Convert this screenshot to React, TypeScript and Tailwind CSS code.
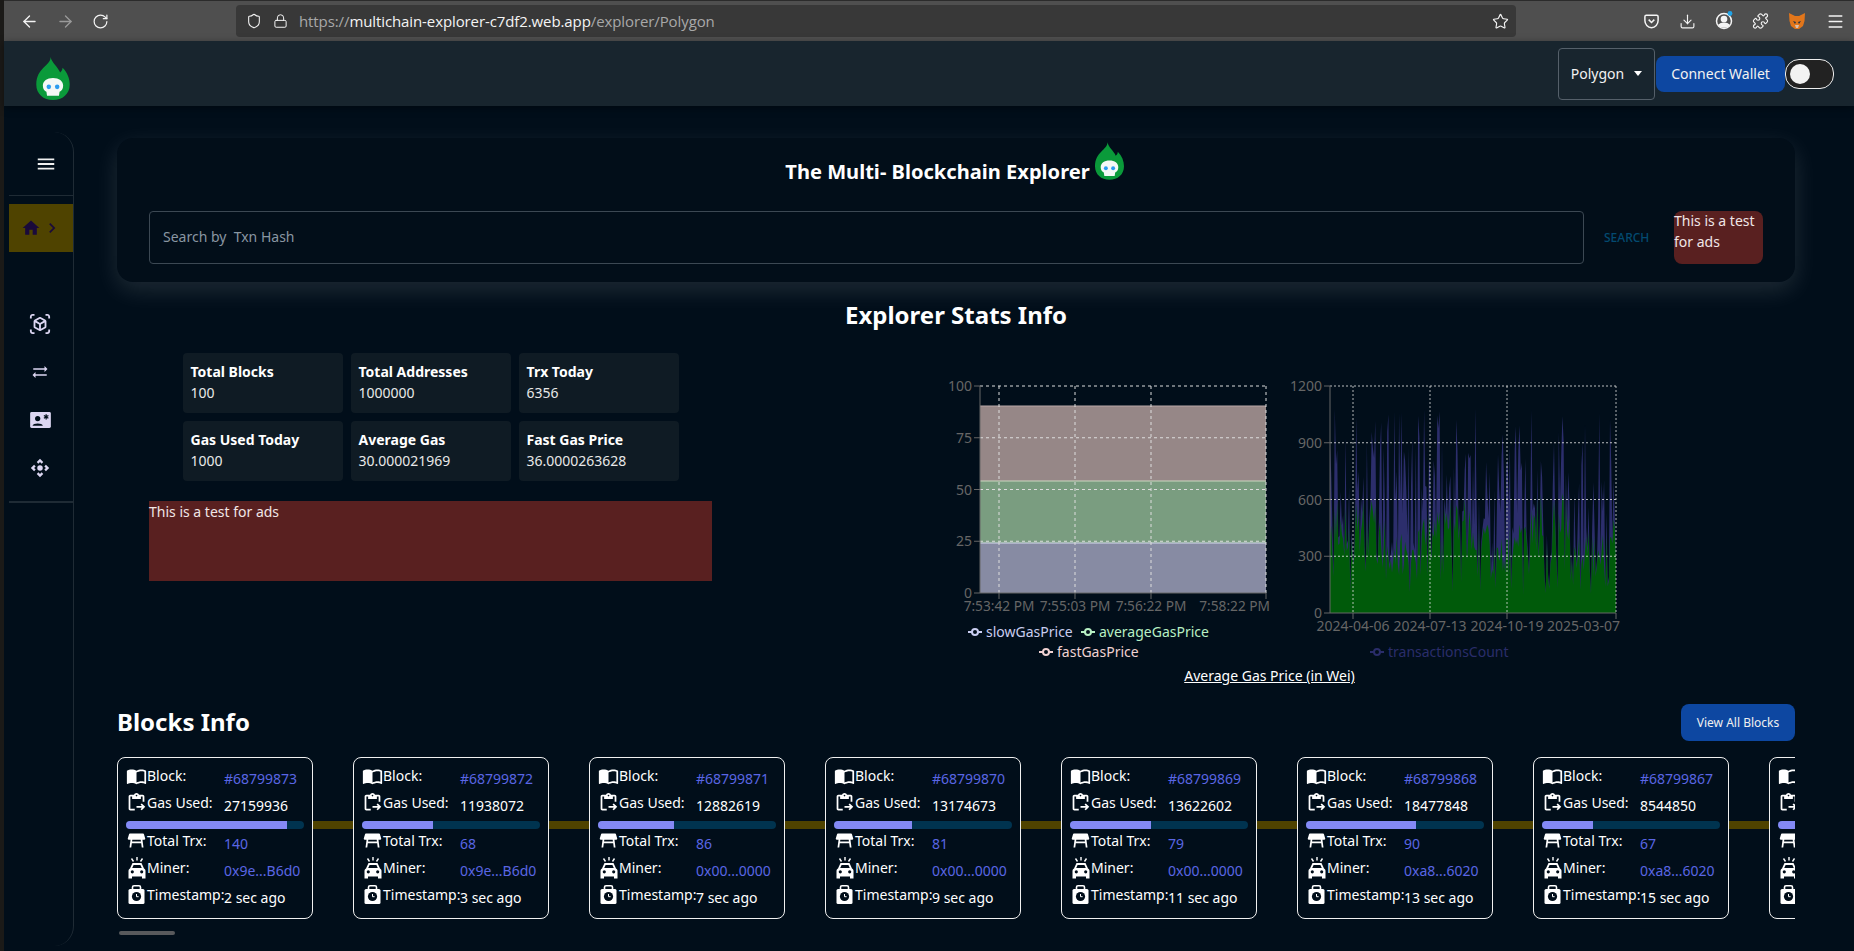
import type { ReactNode } from 'react';
import { ArrowLeft, ArrowRight, RotateCw, Shield, Lock, Star, Download, Puzzle, Menu } from 'lucide-react';
import {
  MdMenu,
  MdHome,
  MdChevronRight,
  MdOutlineViewInAr,
  MdSyncAlt,
  MdControlCamera,
  MdImportContacts,
  MdOutlineContentPasteGo,
  MdTableRestaurant,
} from 'react-icons/md';

const blocks = [
  { id: 68799873, gas: 27159936, trx: 140, miner: '0x9e...B6d0', time: '2 sec ago' },
  { id: 68799872, gas: 11938072, trx: 68, miner: '0x9e...B6d0', time: '3 sec ago' },
  { id: 68799871, gas: 12882619, trx: 86, miner: '0x00...0000', time: '7 sec ago' },
  { id: 68799870, gas: 13174673, trx: 81, miner: '0x00...0000', time: '9 sec ago' },
  { id: 68799869, gas: 13622602, trx: 79, miner: '0x00...0000', time: '11 sec ago' },
  { id: 68799868, gas: 18477848, trx: 90, miner: '0xa8...6020', time: '13 sec ago' },
  { id: 68799867, gas: 8544850, trx: 67, miner: '0xa8...6020', time: '15 sec ago' },
  { id: 68799866, gas: 14220311, trx: 74, miner: '0xa8...6020', time: '17 sec ago' },
];

const stats = [
  { label: 'Total Blocks', value: '100' },
  { label: 'Total Addresses', value: '1000000' },
  { label: 'Trx Today', value: '6356' },
  { label: 'Gas Used Today', value: '1000' },
  { label: 'Average Gas', value: '30.000021969' },
  { label: 'Fast Gas Price', value: '36.0000263628' },
];

// fake but stable tx counts for the area chart
function noise(i: number) {
  const x = Math.sin(i * 12.9898 + 4.1) * 43758.5453;
  return x - Math.floor(x);
}

const TX_POINTS = 240;
const txTotal = Array.from({ length: TX_POINTS + 1 }, (_, i) => 110 + noise(i + 3) * 975);
const txLower = txTotal.map((v, i) => Math.min(v * 0.9, 300 + Math.sin(i / 13) * 120 + noise(i + 211) * 260));

function toArea(values: number[], left: number, right: number, bottom: number, top: number) {
  let d = `M${left} ${bottom}`;
  values.forEach((v, i) => {
    const x = left + ((right - left) * i) / (values.length - 1);
    d += ` L${x.toFixed(1)} ${(bottom - ((bottom - top) * v) / 1200).toFixed(1)}`;
  });
  return `${d} L${right} ${bottom} Z`;
}

function Logo({ className }: { className: string }) {
  return (
    <svg viewBox="0 0 28 36" className={className}>
      <path
        d="M12 0C13 5 18 8 20 13C21 12 22 11 22 9C26 13 28 18 28 23C28 31 22 36 14 36C6 36 0 31 0 23C0 16 3 12 6 9C9 6 12 4 12 0Z"
        fill="#0a9a3a"
      />
      <path d="M5.5 24C5.5 20 9 17.5 14 17.5C19 17.5 22.5 20 22.5 24C22.5 27 21 28.5 19.5 29L19 32.5H9L8.5 29C7 28.5 5.5 27 5.5 24Z" fill="#f4f8f6" />
      <circle cx="10.5" cy="25" r="1.9" fill="#2c9cf0" />
      <circle cx="17.5" cy="25" r="1.9" fill="#2c9cf0" />
    </svg>
  );
}

function ContactIcon() {
  return (
    <svg viewBox="0 0 22 17" className="w-[21px] h-[16px]">
      <rect width="22" height="17" rx="1.5" fill="#dcd6f2" />
      <circle cx="8" cy="7" r="2.8" fill="#010e1a" />
      <path d="M2.5 14.5C3 11.5 13 11.5 13.5 14.5Z" fill="#010e1a" />
      <path d="M17 2.5V8M14.6 3.8L19.4 6.7M19.4 3.8L14.6 6.7" stroke="#010e1a" strokeWidth="1.3" />
    </svg>
  );
}

function MinerIcon() {
  return (
    <svg viewBox="0 0 18 22" className="w-[18px] h-[22px]" fill="white">
      <path d="M9 0V3.5M3.5 1.5L5.5 4.5M14.5 1.5L12.5 4.5" stroke="white" strokeWidth="1.4" fill="none" />
      <path
        fillRule="evenodd"
        d="M4.5 6H13.5L16 11.5C17 12 17.5 12.8 17.5 14V21.5H14V19.5H4V21.5H0.5V14C0.5 12.8 1 12 2 11.5ZM5.6 8L4.2 11H13.8L12.4 8ZM4.3 13.2A1.6 1.6 0 1 0 4.3 16.4A1.6 1.6 0 1 0 4.3 13.2ZM13.7 13.2A1.6 1.6 0 1 0 13.7 16.4A1.6 1.6 0 1 0 13.7 13.2Z"
      />
    </svg>
  );
}

function StampIcon() {
  return (
    <svg viewBox="0 0 17 19" className="w-[17px] h-[19px]">
      <path d="M4.5 4V2.2C4.5 1.2 5.2 .8 6 .8H11C11.8 .8 12.5 1.2 12.5 2.2V4" fill="none" stroke="white" strokeWidth="1.6" />
      <rect x="0.5" y="4" width="16" height="15" rx="1.5" fill="white" />
      <circle cx="8.5" cy="11.5" r="4.6" fill="#010e1a" />
      <path d="M8.5 9V11.7H10.6" fill="none" stroke="white" strokeWidth="1" />
    </svg>
  );
}

function BrowserBar() {
  return (
    <div className="h-[41px] shrink-0 flex items-center bg-[#4f4f4f] border-t border-[#2b2b2b] text-[#f4f4f4]">
      <div className="w-[232px] pl-[16px] flex items-center gap-[17px]">
        <ArrowLeft className="w-[19px] h-[19px]" strokeWidth={1.7} />
        <ArrowRight className="w-[19px] h-[19px] text-[#9a9a9a]" strokeWidth={1.7} />
        <RotateCw className="w-[17px] h-[17px]" strokeWidth={1.7} />
      </div>
      <div className="w-[1280px] h-[32px] rounded bg-[#383838] flex items-center pl-[9px] pr-[7px]">
        <Shield className="w-[16px] h-[18px] shrink-0 ml-px" strokeWidth={1.6} />
        <Lock className="w-[15px] h-[18px] ml-[11px] shrink-0" strokeWidth={1.6} />
        <span className="ml-[11px] text-[15px] tracking-[-0.1px] text-[#a8a8a8] font-['Open_Sans',sans-serif]">
          https://<span className="text-[#f4f4f4]">multichain-explorer-c7df2.web.app</span>/explorer/Polygon
        </span>
        <Star className="w-[17px] h-[17px] ml-auto" strokeWidth={1.6} />
      </div>
      <div className="flex-1 flex items-center gap-[19px] pl-[127px]">
        <svg viewBox="0 0 18 18" className="w-[17px] h-[17px] shrink-0" fill="none" stroke="currentColor" strokeWidth="1.6">
          <path d="M3.5 2.5H14.5C15.5 2.5 16 3 16 4V8C16 12 13 15.5 9 15.5C5 15.5 2 12 2 8V4C2 3 2.5 2.5 3.5 2.5Z" />
          <path d="M6 7L9 10L12 7" />
        </svg>
        <Download className="w-[17px] h-[17px] shrink-0" strokeWidth={1.6} />
        <svg viewBox="0 0 18 18" className="w-[18px] h-[18px] shrink-0 overflow-visible" fill="none" stroke="currentColor" strokeWidth="1.5">
          <circle cx="9" cy="9" r="7.5" />
          <circle cx="9" cy="7" r="2.6" fill="currentColor" />
          <path d="M4 13C6 10.5 12 10.5 14 13C12 15.6 6 15.6 4 13Z" fill="currentColor" />
          <circle cx="15" cy="1.5" r="2.4" fill="#1fa3e8" stroke="none" />
        </svg>
        <Puzzle className="w-[17px] h-[18px] shrink-0" strokeWidth={1.6} />
        <svg viewBox="0 0 18 18" className="w-[18px] h-[18px] shrink-0">
          <path d="M1 1L7 4H11L17 1L16.5 9L15 14L11 17H7L3 14L1.5 9Z" fill="#e2761b" />
          <path d="M5 9L8 10L7 12ZM13 9L10 10L11 12Z" fill="#233447" />
          <path d="M7 13H11L10 16H8Z" fill="#d7c1b3" />
        </svg>
        <Menu className="w-[19px] h-[19px] shrink-0 ml-[1px]" strokeWidth={1.7} />
      </div>
    </div>
  );
}

function TopNav() {
  return (
    <div className="h-[65px] shrink-0 bg-[#18252e] flex items-center pl-[32px] pr-[20px] shadow-[0_2px_8px_rgba(0,0,0,0.4)]">
      <Logo className="w-[34px] h-[43px] mt-[9px]" />
      <button className="ml-auto h-[52px] w-[97px] rounded border border-[#55606a] flex items-center justify-center gap-[10px] text-[14px] text-[#f2f2f2]">
        Polygon
        <span className="w-0 h-0 border-x-[4px] border-x-transparent border-t-[5px] border-t-white" />
      </button>
      <button className="h-[36px] w-[129px] ml-px rounded-lg bg-[#0d47a1] text-[14px] text-[#f2f2f2]">Connect Wallet</button>
      <div className="w-[49px] h-[30px] mt-[1px] rounded-[14px] border-[1.5px] border-[#eeeeee] bg-[#222222] flex items-center pl-[4px]">
        <span className="w-[20px] h-[20px] rounded-full bg-[#f2f2f2]" />
      </div>
    </div>
  );
}

function SideIcon({ children }: { children: ReactNode }) {
  return <div className="h-[48px] flex items-center justify-center pr-[2px] text-[#dcd6f2]">{children}</div>;
}

function Sidebar() {
  return (
    <aside className="w-[70px] shrink-0 mt-[26px] mb-[5px] pl-[5px] border-r border-[#1f2b35] rounded-r-[20px]">
      <div className="h-[64px] flex items-center justify-center pl-[10px] text-[#f0f0f0] border-b border-[#1f2b35]">
        <MdMenu size={22} />
      </div>
      <div className="h-[48px] mt-[8px] bg-[#4f4300] flex items-center pl-[12px] text-[#1a0a3a]">
        <MdHome size={20} />
        <MdChevronRight size={20} className="ml-[1px]" />
      </div>
      <div className="mt-[48px]">
        <SideIcon>
          <MdOutlineViewInAr size={22} />
        </SideIcon>
        <SideIcon>
          <MdSyncAlt size={18} />
        </SideIcon>
        <SideIcon>
          <ContactIcon />
        </SideIcon>
        <SideIcon>
          <MdControlCamera size={22} />
        </SideIcon>
      </div>
      <div className="mt-[9px] h-[2px] bg-[#1f2b35]" />
    </aside>
  );
}

function Hero() {
  return (
    <div className="h-[144px] rounded-2xl bg-[#020e19] shadow-[0_8px_24px_rgba(255,255,255,0.12)] px-8 pt-[4px]">
      <div className="flex items-end justify-center h-[38px] gap-[5px] pr-[3px]">
        <h1 className="text-[20.1px] leading-[30px] font-bold text-white -mb-[7px]">The Multi- Blockchain Explorer</h1>
        <Logo className="w-[29px] h-[38px]" />
      </div>
      <div className="flex items-stretch mt-[31px] h-[53px]">
        <div className="flex-1 rounded border border-[#3c4853] flex items-center pl-[13px] pb-[2px] text-[14px] text-[#8996a2]">
          Search by&nbsp; Txn Hash
        </div>
        <button className="w-[90px] pl-[20px] text-left text-[12px] font-medium text-[#034a70]">SEARCH</button>
        <div className="w-[89px] rounded-lg bg-[#592020] text-[14px] leading-[21px] text-[#f0e6e6]">
          <p className="-mt-px">This is a test for ads</p>
        </div>
      </div>
    </div>
  );
}

function Legend({ x, y, color, label }: { x: number; y: number; color: string; label: string }) {
  return (
    <g>
      <line x1={x} x2={x + 14} y1={y} y2={y} stroke={color} strokeWidth="2" />
      <circle cx={x + 7} cy={y} r="3" fill="#010e1a" stroke={color} strokeWidth="2" />
      <text x={x + 18} y={y + 5} fontSize="14" fill={color}>
        {label}
      </text>
    </g>
  );
}

function GasChart() {
  const grid = [16, 67.75, 119.5, 171.25];
  const vert = [89, 165, 241, 356];
  return (
    <svg width="360" height="295" className="shrink-0">
      <rect x="70" y="36" width="286" height="75" fill="#968787" />
      <rect x="70" y="111" width="286" height="62" fill="#7a9d80" />
      <rect x="70" y="173" width="286" height="50" fill="#878ba3" />
      <line x1="70" x2="356" y1="36" y2="36" stroke="#b9a8a8" />
      <line x1="70" x2="356" y1="111" y2="111" stroke="#ccd8c0" />
      <line x1="70" x2="356" y1="173" y2="173" stroke="#d8dcf0" />
      {grid.map((y) => (
        <line key={y} x1="70" x2="356" y1={y} y2={y} stroke="#ddd" strokeDasharray="3 3" />
      ))}
      {vert.map((x) => (
        <line key={x} x1={x} x2={x} y1="16" y2="223" stroke="#ddd" strokeDasharray="3 3" />
      ))}
      <path d="M70 16V223H356" fill="none" stroke="#666" />
      {[
        ['100', 16],
        ['75', 67.75],
        ['50', 119.5],
        ['25', 171.25],
        ['0', 223],
      ].map(([t, y]) => (
        <g key={t}>
          <line x1="64" x2="70" y1={y} y2={y} stroke="#666" />
          <text x="62" y={Number(y) + 5} fontSize="14" fill="#666" textAnchor="end">
            {t}
          </text>
        </g>
      ))}
      {vert.map((x) => (
        <line key={x} x1={x} x2={x} y1="223" y2="229" stroke="#666" />
      ))}
      <text x="89" y="241" fontSize="13.7" fill="#666" textAnchor="middle">7:53:42 PM</text>
      <text x="165" y="241" fontSize="13.7" fill="#666" textAnchor="middle">7:55:03 PM</text>
      <text x="241" y="241" fontSize="13.7" fill="#666" textAnchor="middle">7:56:22 PM</text>
      <text x="360" y="241" fontSize="13.7" fill="#666" textAnchor="end">7:58:22 PM</text>
      <Legend x={58} y={262} color="#c9cdf0" label="slowGasPrice" />
      <Legend x={171} y={262} color="#b8f0c4" label="averageGasPrice" />
      <Legend x={129} y={282} color="#f0d2d2" label="fastGasPrice" />
    </svg>
  );
}

function TxChart() {
  const grid = [16, 72.75, 129.5, 186.25];
  const vert = [83, 160, 237, 346];
  return (
    <svg width="360" height="295" className="shrink-0">
      <path d={toArea(txTotal, 60, 346, 243, 16)} fill="#2c2e6c" />
      <path d={toArea(txLower, 60, 346, 243, 16)} fill="#005a0a" />
      {grid.map((y) => (
        <line key={y} x1="60" x2="346" y1={y} y2={y} stroke="#ddd" strokeOpacity="0.85" strokeDasharray="2 2" />
      ))}
      {vert.map((x) => (
        <line key={x} x1={x} x2={x} y1="16" y2="243" stroke="#ddd" strokeOpacity="0.8" strokeDasharray="2 2" />
      ))}
      <path d="M60 16V243H346" fill="none" stroke="#666" />
      {[
        ['1200', 16],
        ['900', 72.75],
        ['600', 129.5],
        ['300', 186.25],
        ['0', 243],
      ].map(([t, y]) => (
        <g key={t}>
          <line x1="54" x2="60" y1={y} y2={y} stroke="#666" />
          <text x="52" y={Number(y) + 5} fontSize="14" fill="#666" textAnchor="end">
            {t}
          </text>
        </g>
      ))}
      {vert.map((x) => (
        <line key={x} x1={x} x2={x} y1="243" y2="249" stroke="#666" />
      ))}
      <text x="83" y="261" fontSize="14" fill="#666" textAnchor="middle">2024-04-06</text>
      <text x="160" y="261" fontSize="14" fill="#666" textAnchor="middle">2024-07-13</text>
      <text x="237" y="261" fontSize="14" fill="#666" textAnchor="middle">2024-10-19</text>
      <text x="350" y="261" fontSize="14" fill="#666" textAnchor="end">2025-03-07</text>
      <Legend x={100} y={282} color="#2a2d6a" label="transactionsCount" />
    </svg>
  );
}

function Row({ icon, label, children }: { icon: ReactNode; label: string; children: ReactNode }) {
  return (
    <div className="h-[27px] flex items-center text-[14px] whitespace-nowrap">
      <div className="w-[98px] flex items-center text-white">
        <span className="w-[21px] h-[22px] flex items-center justify-center shrink-0">{icon}</span>
        {label}
      </div>
      <div className="mt-[6px]">{children}</div>
    </div>
  );
}

function BlockCard({ block }: { block: (typeof blocks)[number] }) {
  const pct = (block.gas / 30000000) * 100;
  return (
    <div className="w-[196px] h-[162px] shrink-0 rounded-lg border border-[#f0f0f0] pl-[8px] pr-[8px] pt-[4px] bg-[#010e1a]">
      <Row icon={<MdImportContacts size={24} className="text-white" />} label="Block:">
        <span className="text-[#5a66e4]">#{block.id}</span>
      </Row>
      <Row icon={<MdOutlineContentPasteGo size={23} className="text-white" />} label="Gas Used:">
        <span className="text-white">{block.gas}</span>
      </Row>
      <div className="h-[8px] mt-[5px] -mb-[2px] rounded bg-[#00334f] overflow-hidden">
        <div className="h-full bg-[#8489f5]" style={{ width: `${pct}%` }} />
      </div>
      <Row icon={<MdTableRestaurant size={23} className="text-white" />} label="Total Trx:">
        <span className="text-[#5a66e4]">{block.trx}</span>
      </Row>
      <Row icon={<MinerIcon />} label="Miner:">
        <span className="text-[#5a66e4]">{block.miner}</span>
      </Row>
      <Row icon={<StampIcon />} label="Timestamp:">
        <span className="text-white">{block.time}</span>
      </Row>
    </div>
  );
}

export default function App() {
  return (
    <div className="h-[951px] w-[1854px] overflow-hidden flex bg-[#010e1a] text-white font-['Noto_Sans',sans-serif]">
      <div className="w-[4px] shrink-0 bg-[#1b1a18]" />
      <div className="flex-1 min-w-0 flex flex-col">
        <BrowserBar />
        <TopNav />
        <div className="flex-1 min-h-0 flex">
          <Sidebar />
          <main className="flex-1 min-w-0 pl-[43px] pr-[59px] pt-[32px]">
            <Hero />
            <h2 className="mt-[15px] text-[24px] leading-[36px] font-bold text-center">Explorer Stats Info</h2>

            <div className="mt-5 h-[351px] flex">
              <div className="w-[627px] shrink-0">
                <div className="w-[496px] mx-auto grid grid-cols-3 gap-2">
                  {stats.map((s) => (
                    <div key={s.label} className="h-[60px] rounded bg-[#0f1b24] p-2 text-[14px] leading-[21px]">
                      <div className="font-bold">{s.label}</div>
                      <div className="text-[#e8e8e8]">{s.value}</div>
                    </div>
                  ))}
                </div>
                <div className="w-[563px] h-[80px] mx-auto mt-5 bg-[#592020] text-[14px] leading-[21px] text-[#f0e6e6]">
                  This is a test for ads
                </div>
              </div>
              <div className="flex-1 pt-[17px]">
                <div className="flex justify-center">
                  <GasChart />
                  <TxChart />
                </div>
                <p className="text-center text-[14px] leading-[21px] underline">Average Gas Price (in Wei)</p>
              </div>
            </div>

            <div className="flex items-center justify-between h-[37px]">
              <h2 className="text-[24px] leading-[36px] font-bold -mt-[2px]">Blocks Info</h2>
              <button className="w-[114px] h-[37px] rounded-lg bg-[#0d47a1] text-[12px] text-[#f0f0f0]">View All Blocks</button>
            </div>

            <div className="mt-4 flex items-start overflow-hidden">
              {blocks.map((b) => (
                <div key={b.id} className="flex items-start shrink-0">
                  <BlockCard block={b} />
                  <div className="w-[40px] h-[8px] mt-[64px] bg-[#4f4300]" />
                </div>
              ))}
            </div>
            <div className="mt-3 ml-[2px] w-[56px] h-[4px] rounded bg-[#58595c]" />
          </main>
        </div>
      </div>
    </div>
  );
}
